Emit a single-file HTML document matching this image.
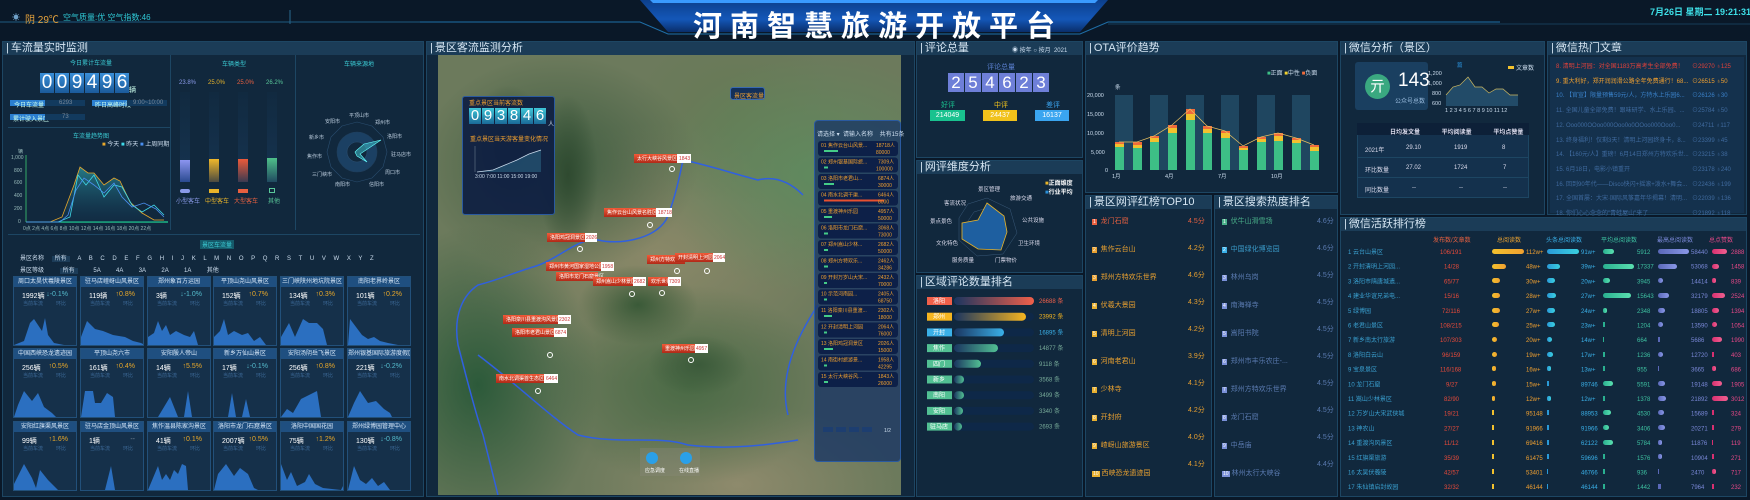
<!DOCTYPE html>
<html><head><meta charset="utf-8">
<style>
*{margin:0;padding:0;box-sizing:border-box}
body{width:1750px;height:500px;overflow:hidden;background:#0a1828;font-family:"Liberation Sans","Noto Sans CJK SC",sans-serif;color:#cfe3f5;position:relative}
.a{position:absolute}
.panel{position:absolute;background:#11283d;border:1px solid #1d4663}
.pt{position:absolute;left:0;top:0;right:0;height:13px;background:#1b3c57;font-size:11px;line-height:13px;color:#d6e6f3;padding-left:3px;white-space:nowrap}
.pt:before{content:"|";margin-right:2px}
.t7{font-size:7px;white-space:nowrap}
.t6{font-size:6px;white-space:nowrap}
.dg{display:inline-block;text-align:center;color:#fff}
.card{position:absolute;width:64px;height:70px;background:#15304a;border:1px solid #22507a;overflow:hidden}
.card .h{height:10px;background:#1f4f80;font-size:6px;line-height:10px;text-align:center;color:#d8e8f8;white-space:nowrap}
.card .v{position:absolute;top:14px;left:8px;font-size:7px;color:#fff}
.card .p{position:absolute;top:14px;right:8px;font-size:7px}
.card .s{position:absolute;top:23px;font-size:5px;color:#3d6a99}
.card svg{position:absolute;left:0;bottom:0}
</style></head><body>

<!-- HEADER -->
<svg class="a" style="left:0;top:0" width="1750" height="42">
  <defs><linearGradient id="tb" x1="0" x2="0" y1="0" y2="1"><stop offset="0" stop-color="#0c3f8c"/><stop offset="0.6" stop-color="#1457b8"/><stop offset="1" stop-color="#0a2e6a"/></linearGradient></defs>
  <polygon points="640,0 1108,0 1080,32 668,32" fill="url(#tb)"/>
  <polygon points="650,0 1098,0 1095,3 653,3" fill="#3a9bff"/>
  <line x1="0" y1="22" x2="290" y2="22" stroke="#1e5a80" stroke-width="1"/>
  <line x1="290" y1="10" x2="290" y2="24" stroke="#2a6a90" stroke-width="1"/>
  <line x1="290" y1="22" x2="640" y2="22" stroke="#1e5a80"/>
  <polyline points="420,22 640,22 668,34 1080,34 1108,22 1500,22" fill="none" stroke="#1f6fa8" stroke-width="1"/>
  <line x1="1108" y1="24" x2="1750" y2="24" stroke="#173c58"/>
</svg>
<div class="a" style="left:12px;top:12px;font-size:8px;color:#6fa0c8">☀</div>
<div class="a" style="left:25px;top:11px;font-size:10px;color:#e6a23c">阴 29℃</div>
<div class="a" style="left:63px;top:12px;font-size:8px;color:#2fc7d4">空气质量:优 空气指数:46</div>
<div class="a" style="left:693px;top:3px;font-size:29px;font-weight:bold;color:#fff;letter-spacing:8px;white-space:nowrap">河南智慧旅游开放平台</div>
<div class="a" style="left:1650px;top:5px;font-size:9px;font-weight:bold;color:#3ee0e8;white-space:nowrap">7月26日 星期二 19:21:31</div>

<!-- LEFT PANEL -->
<div class="panel" style="left:2px;top:41px;width:422px;height:456px">
  <div class="pt">车流量实时监测</div>
</div>
<div class="a t6" style="left:70px;top:58px;color:#3ccbd4">今日累计车流量</div>
<div class="a" style="left:40px;top:73px;display:flex;gap:1px">
  <div class="dg" style="width:14px;height:20px;background:linear-gradient(#3a8fd8,#1b5a9a);font-size:19px;line-height:20px">0</div>
  <div class="dg" style="width:14px;height:20px;background:linear-gradient(#3a8fd8,#1b5a9a);font-size:19px;line-height:20px">0</div>
  <div class="dg" style="width:14px;height:20px;background:linear-gradient(#3a8fd8,#1b5a9a);font-size:19px;line-height:20px">9</div>
  <div class="dg" style="width:14px;height:20px;background:linear-gradient(#3a8fd8,#1b5a9a);font-size:19px;line-height:20px">4</div>
  <div class="dg" style="width:14px;height:20px;background:linear-gradient(#3a8fd8,#1b5a9a);font-size:19px;line-height:20px">9</div>
  <div class="dg" style="width:14px;height:20px;background:linear-gradient(#3a8fd8,#1b5a9a);font-size:19px;line-height:20px">6</div>
</div>
<div class="a t7" style="left:129px;top:85px;color:#cfe">辆</div>
<div class="a" style="left:10px;top:100px;width:35px;height:6px;background:#2b7fd0"></div><div class="a t6" style="left:14px;top:100px;color:#cfe">今日车流量</div>
<div class="a" style="left:45px;top:100px;width:40px;height:6px;background:#123a5e"></div><div class="a t6" style="left:59px;top:100px;color:#789">6293</div>
<div class="a" style="left:92px;top:100px;width:35px;height:6px;background:#2b7fd0"></div><div class="a t6" style="left:95px;top:100px;color:#cfe">昨日高峰时段</div>
<div class="a" style="left:127px;top:100px;width:40px;height:6px;background:#123a5e"></div><div class="a t6" style="left:133px;top:100px;color:#789">9:00~10:00</div>
<div class="a" style="left:10px;top:114px;width:35px;height:6px;background:#2b7fd0"></div><div class="a t6" style="left:13px;top:114px;color:#cfe">累计驶入景区</div>
<div class="a" style="left:45px;top:114px;width:40px;height:6px;background:#123a5e"></div><div class="a t6" style="left:62px;top:114px;color:#789">73</div>
<div class="a" style="left:8px;top:127px;width:162px;height:1px;background:#1d4663"></div>
<div class="a t6" style="left:73px;top:131px;color:#3ccbd4">车流量趋势图</div>
<div class="a t6" style="left:102px;top:139px;color:#cde"><span style="color:#e9a82a">■</span> 今天 <span style="color:#3fd8e8">■</span> 昨天 <span style="color:#4a8ff0">■</span> 上周同期</div>
<svg class="a" style="left:8px;top:145px" width="165" height="88">
  <g font-size="5" fill="#9bb">
    <text x="10" y="8">辆</text><text x="3" y="14">1,000</text><text x="6" y="27">800</text><text x="6" y="39">600</text><text x="6" y="52">400</text><text x="6" y="65">200</text><text x="10" y="78">0</text>
    <text x="15" y="85">0点 2点  4点  6点  8点 10点 12点 14点 16点 18点 20点 22点</text>
  </g>
  <line x1="18" y1="10" x2="18" y2="77" stroke="#3a6"/>
  <line x1="18" y1="77" x2="160" y2="77" stroke="#2fa"/>
  <defs><linearGradient id="ag" x1="0" x2="0" y1="0" y2="1"><stop offset="0" stop-color="#2b8f9a" stop-opacity=".8"/><stop offset="1" stop-color="#123a5a" stop-opacity=".2"/></linearGradient></defs>
  <path d="M18,77 L42,77 54,72 66,40 72,22 80,28 86,28 96,40 106,33 112,36 122,57 134,68 146,75 156,75 L156,77Z" fill="url(#ag)"/>
  <path d="M18,77 L42,77 54,72 66,40 72,22 80,28 86,28 96,40 106,33 112,36 122,57 134,68 146,75 156,75" fill="none" stroke="#e9a82a" stroke-width=".8"/>
  <path d="M18,77 L50,77 62,72 70,30 78,40 86,30 96,52 106,40 114,42 124,60 134,67 146,60 156,70" fill="none" stroke="#3fd8e8" stroke-width=".8"/>
  <path d="M18,77 L52,77 60,70 68,45 76,33 86,40 96,48 106,38 114,52 124,62 136,58 148,64 156,72" fill="none" stroke="#4a8ff0" stroke-width=".8"/>
</svg>
<div class="a" style="left:170px;top:55px;width:1px;height:175px;background:#1d4663"></div>
<div class="a" style="left:295px;top:55px;width:1px;height:175px;background:#1d4663"></div>
<div class="a t6" style="left:222px;top:59px;color:#3ccbd4">车辆类型</div>
<div class="a t6" style="left:344px;top:59px;color:#3ccbd4">车辆来源地</div>
<div class="a t6" style="left:179px;top:80px;color:#8a9ae8">23.8%</div>
<div class="a t6" style="left:208px;top:80px;color:#e8b42a">25.0%</div>
<div class="a t6" style="left:237px;top:80px;color:#e86040">25.0%</div>
<div class="a t6" style="left:266px;top:80px;color:#5ac89a">26.2%</div>
<div class="a" style="left:180px;top:92px;width:10px;height:90px;background:linear-gradient(#112a40,#163350)"></div>
<div class="a" style="left:209px;top:92px;width:10px;height:90px;background:linear-gradient(#112a40,#163350)"></div>
<div class="a" style="left:238px;top:92px;width:10px;height:90px;background:linear-gradient(#112a40,#163350)"></div>
<div class="a" style="left:267px;top:92px;width:10px;height:90px;background:linear-gradient(#112a40,#163350)"></div>
<div class="a" style="left:180px;top:160px;width:10px;height:22px;background:linear-gradient(#8c95f0,#2a4a90)"></div>
<div class="a" style="left:209px;top:159px;width:10px;height:23px;background:linear-gradient(#f0b82a,#4a4a40)"></div>
<div class="a" style="left:238px;top:159px;width:10px;height:23px;background:linear-gradient(#ec5a3a,#3a3a50)"></div>
<div class="a" style="left:267px;top:158px;width:10px;height:24px;background:linear-gradient(#4fc08a,#204a60)"></div>
<div class="a t6" style="left:176px;top:196px;color:#8a9ae8">小型客车</div>
<div class="a t6" style="left:205px;top:196px;color:#e8b42a">中型客车</div>
<div class="a t6" style="left:234px;top:196px;color:#e86040">大型客车</div>
<div class="a t6" style="left:268px;top:196px;color:#5ac89a">其他</div>
<div class="a" style="left:180px;top:189px;width:10px;height:4px;background:#8a9ae8;border-radius:2px"></div>
<div class="a" style="left:209px;top:189px;width:10px;height:4px;background:#e8b42a"></div>
<div class="a" style="left:238px;top:189px;width:10px;height:4px;background:#e86040"></div>
<div class="a" style="left:269px;top:188px;width:6px;height:5px;border:1px solid #5ac89a"></div>
<svg class="a" style="left:297px;top:100px" width="122" height="110">
  <g transform="translate(60,52)" fill="none" stroke="#2a4e70" stroke-width=".6">
    <polygon points="0,-30 15,-26 26,-15 30,0 26,15 15,26 0,30 -15,26 -26,15 -30,0 -26,-15 -15,-26"/>
    <circle r="20" fill="#22507d" opacity=".6"/>
    <circle r="10" fill="#11283d"/>
    <polygon points="0,-2 7,-8 24,-12 3,2 10,10 0,4 -2,0" fill="#3bb0c0" fill-opacity=".6" stroke="#6ff"/>
  </g>
  <g font-size="5" fill="#bcd">
    <text x="52" y="17">平顶山市</text><text x="78" y="24">郑州市</text><text x="90" y="38">洛阳市</text><text x="94" y="56">驻马店市</text><text x="88" y="74">周口市</text><text x="72" y="86">信阳市</text><text x="38" y="86">南阳市</text><text x="15" y="76">三门峡市</text><text x="10" y="58">焦作市</text><text x="12" y="39">新乡市</text><text x="28" y="23">安阳市</text>
  </g>
</svg>
<div class="a" style="left:8px;top:234px;width:412px;height:1px;background:#1d4663"></div>
<div class="a t6" style="left:200px;top:240px;color:#3ccbd4;background:#155a6a;padding:0 2px">景区车流量</div>
<div class="a t6" style="left:20px;top:253px;color:#cde;word-spacing:6px">景区名称 <span style="background:#1c3c58;padding:0 3px">所有</span> A B C D E F G H I J K L M N O P Q R S T U V W X Y Z</div>
<div class="a t6" style="left:20px;top:265px;color:#cde;word-spacing:14px">景区等级 <span style="background:#1c3c58;padding:0 3px">所有</span> 5A 4A 3A 2A 1A 其他</div>

<!-- cards -->
<div class="card" style="left:13px;top:276px"><div class="h">周口太昊伏羲陵景区</div><div class="v">1992辆</div><div class="p" style="color:#5bc">↓-0.1%</div><div class="s" style="left:9px">当前车流</div><div class="s" style="left:42px">环比</div><svg width="64" height="30"><path d="M0,30 L10,26 16,8 20,4 24,10 28,16 31,3 34,20 40,28 50,30Z" fill="#2b6fc0"/></svg></div>
<div class="card" style="left:80px;top:276px"><div class="h">驻马店嵖岈山风景区</div><div class="v">119辆</div><div class="p" style="color:#e8a82a">↑0.8%</div><div class="s" style="left:9px">当前车流</div><div class="s" style="left:42px">环比</div><svg width="64" height="30"><path d="M0,30 L0,22 6,6 14,14 22,16 32,20 44,22 52,26 60,28 64,30Z" fill="#2b6fc0"/></svg></div>
<div class="card" style="left:147px;top:276px"><div class="h">郑州象百方运园</div><div class="v">3辆</div><div class="p" style="color:#5bc">↓-1.0%</div><div class="s" style="left:9px">当前车流</div><div class="s" style="left:42px">环比</div><svg width="64" height="30"><path d="M0,30 L0,22 6,18 10,6 14,16 18,10 22,20 28,16 36,20 42,22 46,16 50,30Z" fill="#2b6fc0"/></svg></div>
<div class="card" style="left:213px;top:276px"><div class="h">平顶山尧山风景区</div><div class="v">152辆</div><div class="p" style="color:#e8a82a">↑0.7%</div><div class="s" style="left:9px">当前车流</div><div class="s" style="left:42px">环比</div><svg width="64" height="30"><path d="M0,30 L0,22 6,16 10,4 14,20 20,16 28,20 34,18 40,26 46,22 52,30Z" fill="#2b6fc0"/></svg></div>
<div class="card" style="left:280px;top:276px"><div class="h">三门峡陕州地坑院景区</div><div class="v">134辆</div><div class="p" style="color:#e8a82a">↑0.3%</div><div class="s" style="left:9px">当前车流</div><div class="s" style="left:42px">环比</div><svg width="64" height="30"><path d="M0,30 L0,22 8,8 14,22 22,4 28,8 36,8 42,14 46,30Z" fill="#2b6fc0"/></svg></div>
<div class="card" style="left:347px;top:276px"><div class="h">南阳老界岭景区</div><div class="v">101辆</div><div class="p" style="color:#e8a82a">↑0.2%</div><div class="s" style="left:9px">当前车流</div><div class="s" style="left:42px">环比</div><svg width="64" height="30"><path d="M0,30 L2,4 8,12 14,20 20,24 26,22 32,26 40,28 50,30Z" fill="#2b6fc0"/></svg></div>

<div class="card" style="left:13px;top:348px"><div class="h">中国西峡恐龙遗迹园</div><div class="v">256辆</div><div class="p" style="color:#e8a82a">↑0.5%</div><div class="s" style="left:9px">当前车流</div><div class="s" style="left:42px">环比</div><svg width="64" height="30"><path d="M0,30 L4,18 10,4 18,14 24,6 30,20 38,26 42,30Z" fill="#2b6fc0"/></svg></div>
<div class="card" style="left:80px;top:348px"><div class="h">平顶山尧六市</div><div class="v">161辆</div><div class="p" style="color:#e8a82a">↑0.4%</div><div class="s" style="left:9px">当前车流</div><div class="s" style="left:42px">环比</div><svg width="64" height="30"><path d="M0,30 L4,4 12,4 14,16 20,16 26,6 32,10 34,30Z" fill="#2b6fc0"/></svg></div>
<div class="card" style="left:147px;top:348px"><div class="h">安阳殷人帝山</div><div class="v">14辆</div><div class="p" style="color:#e8a82a">↑5.5%</div><div class="s" style="left:9px">当前车流</div><div class="s" style="left:42px">环比</div><svg width="64" height="30"><path d="M10,30 L22,10 30,30Z M36,30 L40,4 44,30Z" fill="#2b6fc0"/></svg></div>
<div class="card" style="left:213px;top:348px"><div class="h">新乡万仙山景区</div><div class="v">17辆</div><div class="p" style="color:#5bc">↓-0.1%</div><div class="s" style="left:9px">当前车流</div><div class="s" style="left:42px">环比</div><svg width="64" height="30"><path d="M14,30 L18,6 22,30Z M28,30 L32,12 36,30Z" fill="#2b6fc0"/></svg></div>
<div class="card" style="left:280px;top:348px"><div class="h">安阳汤阴岳飞景区</div><div class="v">256辆</div><div class="p" style="color:#e8a82a">↑0.8%</div><div class="s" style="left:9px">当前车流</div><div class="s" style="left:42px">环比</div><svg width="64" height="30"><path d="M0,30 L6,22 12,26 20,12 28,8 36,4 40,30Z" fill="#2b6fc0"/></svg></div>
<div class="card" style="left:347px;top:348px"><div class="h">郑州银基国际旅游度假区</div><div class="v">221辆</div><div class="p" style="color:#5bc">↓-0.2%</div><div class="s" style="left:9px">当前车流</div><div class="s" style="left:42px">环比</div><svg width="64" height="30"><path d="M0,30 L6,16 12,4 20,16 28,14 36,22 42,26 44,30Z" fill="#2b6fc0"/></svg></div>

<div class="card" style="left:13px;top:421px"><div class="h">安阳红旗渠风景区</div><div class="v">99辆</div><div class="p" style="color:#e8a82a">↑1.6%</div><div class="s" style="left:9px">当前车流</div><div class="s" style="left:42px">环比</div><svg width="64" height="30"><path d="M0,30 L0,24 10,4 18,18 22,28 26,10 34,20 44,30Z" fill="#2b6fc0"/></svg></div>
<div class="card" style="left:80px;top:421px"><div class="h">驻马店金顶山风景区</div><div class="v">1辆</div><div class="p" style="color:#789">--</div><div class="s" style="left:9px">当前车流</div><div class="s" style="left:42px">环比</div><svg width="64" height="30"><path d="M24,30 L30,6 34,30Z" fill="#2b6fc0"/></svg></div>
<div class="card" style="left:147px;top:421px"><div class="h">焦作温县陈家沟景区</div><div class="v">41辆</div><div class="p" style="color:#e8a82a">↑0.1%</div><div class="s" style="left:9px">当前车流</div><div class="s" style="left:42px">环比</div><svg width="64" height="30"><path d="M0,30 L10,6 14,20 18,14 22,20 26,10 30,14 34,4 38,6 40,30Z" fill="#2b6fc0"/></svg></div>
<div class="card" style="left:213px;top:421px"><div class="h">洛阳市龙门石窟景区</div><div class="v">2007辆</div><div class="p" style="color:#e8a82a">↑0.5%</div><div class="s" style="left:9px">当前车流</div><div class="s" style="left:42px">环比</div><svg width="64" height="30"><path d="M0,30 L4,14 12,4 20,16 26,8 34,14 40,28 44,30Z" fill="#2b6fc0"/></svg></div>
<div class="card" style="left:280px;top:421px"><div class="h">洛阳中国国花园</div><div class="v">75辆</div><div class="p" style="color:#e8a82a">↑1.2%</div><div class="s" style="left:9px">当前车流</div><div class="s" style="left:42px">环比</div><svg width="64" height="30"><path d="M0,30 L0,4 6,20 10,12 16,26 24,22 28,14 34,24 42,28 60,30 64,22 64,30Z" fill="#2b6fc0"/></svg></div>
<div class="card" style="left:347px;top:421px"><div class="h">郑州绿博园管理中心</div><div class="v">130辆</div><div class="p" style="color:#5bc">↓-0.8%</div><div class="s" style="left:9px">当前车流</div><div class="s" style="left:42px">环比</div><svg width="64" height="30"><path d="M0,30 L6,6 12,20 18,24 24,18 30,26 36,22 42,30Z" fill="#2b6fc0"/></svg></div>

<!-- MAP PANEL -->
<div class="panel" style="left:426px;top:41px;width:489px;height:456px"><div class="pt">景区客流监测分析</div></div>
<div class="a" style="left:438px;top:55px;width:463px;height:440px;overflow:hidden;background:
 radial-gradient(ellipse 30px 80px at 130px 120px,#2f4a30,transparent),
 radial-gradient(ellipse 40px 60px at 70px 90px,#304a32,transparent),
 radial-gradient(ellipse 60px 40px at 200px 250px,#3a5a38,transparent),
 radial-gradient(ellipse 50px 30px at 260px 310px,#3b5a3a,transparent),
 radial-gradient(ellipse 120px 160px at 40px 330px,#2c5a3a,transparent),
 radial-gradient(ellipse 140px 110px at 120px 110px,#3e5c40,transparent),
 radial-gradient(ellipse 160px 120px at 380px 120px,#5f8a5e,transparent),
 radial-gradient(ellipse 110px 90px at 300px 60px,#667a55,transparent),
 radial-gradient(ellipse 140px 100px at 250px 330px,#4a6a45,transparent),
 radial-gradient(ellipse 200px 130px at 220px 200px,#8a8868,transparent),
 radial-gradient(ellipse 160px 80px at 300px 430px,#8e8a6c,transparent),
 #6c7a5c">
<svg width="463" height="440" style="position:absolute;left:0;top:0">
 <path d="M245,105 C240,130 235,150 228,165 C215,185 180,190 160,185 C140,182 120,205 95,212 C75,218 60,225 40,230 C25,240 15,260 20,290 C28,320 35,350 45,380 L60,440" fill="none" stroke="#3060e0" stroke-width="1.5"/>
 <path d="M245,105 C270,110 300,120 320,125 340,120 355,130 365,140" fill="none" stroke="#3060e0" stroke-width="1.5"/>
 <path d="M40,300 C80,330 110,360 140,380 180,390 220,380 250,390 290,395 330,390 360,385 400,380 405,440" fill="none" stroke="#3060e0" stroke-width="1.5"/>
 <path d="M380,250 C360,280 340,320 350,360 370,380" fill="none" stroke="#3060e0" stroke-width="1.5"/>
</svg>
</div>
<!-- map overlay left box -->
<div class="a" style="left:462px;top:96px;width:93px;height:119px;background:rgba(14,30,66,.92);border:1px solid #2a5aa0;border-radius:3px"></div>
<div class="a t6" style="left:469px;top:98px;color:#f0a030">重点景区当前客流数</div>
<div class="a" style="left:469px;top:108px;display:flex;gap:1px">
 <div class="dg" style="width:12px;height:16px;background:linear-gradient(#3fc7d8,#1a6a98);font-size:15px;line-height:16px">0</div>
 <div class="dg" style="width:12px;height:16px;background:linear-gradient(#3fc7d8,#1a6a98);font-size:15px;line-height:16px">9</div>
 <div class="dg" style="width:12px;height:16px;background:linear-gradient(#3fc7d8,#1a6a98);font-size:15px;line-height:16px">3</div>
 <div class="dg" style="width:12px;height:16px;background:linear-gradient(#3fc7d8,#1a6a98);font-size:15px;line-height:16px">8</div>
 <div class="dg" style="width:12px;height:16px;background:linear-gradient(#3fc7d8,#1a6a98);font-size:15px;line-height:16px">4</div>
 <div class="dg" style="width:12px;height:16px;background:linear-gradient(#3fc7d8,#1a6a98);font-size:15px;line-height:16px">6</div>
</div>
<div class="a t6" style="left:548px;top:119px;color:#cde">人</div>
<div class="a t6" style="left:470px;top:134px;color:#f0a030">重点景区当天游客量变化情况</div>
<svg class="a" style="left:465px;top:138px" width="90" height="40">
 <path d="M12,34 L28,32 40,27 52,22 64,16 76,12 L76,34Z" fill="#2a6080" opacity=".6"/>
 <polyline points="12,34 28,32 40,27 52,22 64,16 76,12" fill="none" stroke="#cde" stroke-width=".7"/>
 <line x1="10" y1="8" x2="10" y2="34" stroke="#789" stroke-width=".5"/>
 <text x="10" y="40" font-size="5" fill="#cde">3:00  7:00  11:00  15:00  19:00</text>
</svg>
<div class="a" style="left:730px;top:87px;width:35px;height:13px;background:#13305a;border:1px solid #3a6ab0;border-radius:3px"></div>
<div class="a t6" style="left:734px;top:91px;color:#f0a030">景区客流量</div>
<div class="a" style="left:814px;top:120px;width:87px;height:342px;background:rgba(20,50,100,.75);border:1px solid #2a5aa0;border-radius:4px"></div>
<div class="a t6" style="left:817px;top:129px;color:#cde">请选择 ▾ &nbsp;请输入名称 &nbsp; &nbsp;共有15条</div>
<svg class="a" style="left:818px;top:141px" width="82" height="300">
 <g font-size="5">
  <g><rect y="0" width="80" height="15" rx="3" fill="#0d2048"/><text x="3" y="6" fill="#f0a030">01 焦作云台山风景...</text><text x="58" y="6" fill="#f0a030">18718人</text><rect x="6" y="9" width="14" height="2" fill="#4c8"/><text x="58" y="13" fill="#f0a030">80000</text></g>
  <g transform="translate(0,16.5)"><rect width="80" height="15" rx="3" fill="#0d2048"/><text x="3" y="6" fill="#f0a030">02 郑州银基国际旅...</text><text x="60" y="6" fill="#f0a030">7309人</text><rect x="6" y="9" width="4" height="2" fill="#4c8"/><text x="58" y="13" fill="#f0a030">100000</text></g>
  <g transform="translate(0,33)"><rect width="80" height="15" rx="3" fill="#0d2048"/><text x="3" y="6" fill="#f0a030">03 洛阳市老君山...</text><text x="60" y="6" fill="#f0a030">6874人</text><rect x="6" y="9" width="10" height="2" fill="#4c8"/><text x="60" y="13" fill="#f0a030">30000</text></g>
  <g transform="translate(0,49.5)"><rect width="80" height="15" rx="3" fill="#0d2048"/><text x="3" y="6" fill="#f0a030">04 南水北调干渠...</text><text x="60" y="6" fill="#f0a030">6464人</text><rect x="6" y="9" width="60" height="2" fill="#e85030"/><text x="60" y="13" fill="#f0a030">8000</text></g>
  <g transform="translate(0,66)"><rect width="80" height="15" rx="3" fill="#0d2048"/><text x="3" y="6" fill="#f0a030">05 重渡神州乐园</text><text x="60" y="6" fill="#f0a030">4957人</text><rect x="6" y="9" width="8" height="2" fill="#4c8"/><text x="60" y="13" fill="#f0a030">50000</text></g>
  <g transform="translate(0,82.5)"><rect width="80" height="15" rx="3" fill="#0d2048"/><text x="3" y="6" fill="#f0a030">06 洛阳市龙门石窟...</text><text x="60" y="6" fill="#f0a030">3068人</text><rect x="6" y="9" width="4" height="2" fill="#4c8"/><text x="60" y="13" fill="#f0a030">73000</text></g>
  <g transform="translate(0,99)"><rect width="80" height="15" rx="3" fill="#0d2048"/><text x="3" y="6" fill="#f0a030">07 郑州嵩山少林...</text><text x="60" y="6" fill="#f0a030">2682人</text><rect x="6" y="9" width="4" height="2" fill="#4c8"/><text x="60" y="13" fill="#f0a030">50000</text></g>
  <g transform="translate(0,115.5)"><rect width="80" height="15" rx="3" fill="#0d2048"/><text x="3" y="6" fill="#f0a030">08 郑州方特欢乐...</text><text x="60" y="6" fill="#f0a030">2462人</text><rect x="6" y="9" width="4" height="2" fill="#4c8"/><text x="60" y="13" fill="#f0a030">34286</text></g>
  <g transform="translate(0,132)"><rect width="80" height="15" rx="3" fill="#0d2048"/><text x="3" y="6" fill="#f0a030">09 开封万岁山大宋...</text><text x="60" y="6" fill="#f0a030">2432人</text><rect x="6" y="9" width="3" height="2" fill="#4c8"/><text x="60" y="13" fill="#f0a030">70000</text></g>
  <g transform="translate(0,148.5)"><rect width="80" height="15" rx="3" fill="#0d2048"/><text x="3" y="6" fill="#f0a030">10 示范河南园...</text><text x="60" y="6" fill="#f0a030">2405人</text><rect x="6" y="9" width="3" height="2" fill="#4c8"/><text x="60" y="13" fill="#f0a030">68750</text></g>
  <g transform="translate(0,165)"><rect width="80" height="15" rx="3" fill="#0d2048"/><text x="3" y="6" fill="#f0a030">11 洛阳栾川县重渡...</text><text x="60" y="6" fill="#f0a030">2302人</text><rect x="6" y="9" width="8" height="2" fill="#4c8"/><text x="60" y="13" fill="#f0a030">18000</text></g>
  <g transform="translate(0,181.5)"><rect width="80" height="15" rx="3" fill="#0d2048"/><text x="3" y="6" fill="#f0a030">12 开封清明上河园</text><text x="60" y="6" fill="#f0a030">2064人</text><rect x="6" y="9" width="3" height="2" fill="#4c8"/><text x="60" y="13" fill="#f0a030">76000</text></g>
  <g transform="translate(0,198)"><rect width="80" height="15" rx="3" fill="#0d2048"/><text x="3" y="6" fill="#f0a030">13 洛阳鸡冠洞景区</text><text x="60" y="6" fill="#f0a030">2026人</text><rect x="6" y="9" width="9" height="2" fill="#4c8"/><text x="60" y="13" fill="#f0a030">15000</text></g>
  <g transform="translate(0,214.5)"><rect width="80" height="15" rx="3" fill="#0d2048"/><text x="3" y="6" fill="#f0a030">14 南街村旅游景...</text><text x="60" y="6" fill="#f0a030">1958人</text><rect x="6" y="9" width="3" height="2" fill="#4c8"/><text x="60" y="13" fill="#f0a030">42295</text></g>
  <g transform="translate(0,231)"><rect width="80" height="15" rx="3" fill="#0d2048"/><text x="3" y="6" fill="#f0a030">15 太行大峡谷风...</text><text x="60" y="6" fill="#f0a030">1843人</text><rect x="6" y="9" width="4" height="2" fill="#4c8"/><text x="60" y="13" fill="#f0a030">26000</text></g>
 </g>
 <g font-size="5" fill="#cde"><rect x="5" y="286" width="10" height="5" fill="#1d3e70"/><rect x="18" y="286" width="10" height="5" fill="#1d3e70"/><rect x="31" y="286" width="10" height="5" fill="#1d3e70"/><rect x="44" y="286" width="10" height="5" fill="#1d3e70"/><text x="66" y="291">1/2</text></g>
</svg>
<!-- markers -->
<svg class="a" style="left:438px;top:55px" width="380" height="440">
 <defs><linearGradient id="mk" x1="0" x2="0" y1="0" y2="1"><stop offset="0" stop-color="#f05a38"/><stop offset="1" stop-color="#b02a18"/></linearGradient></defs>
 <g font-size="5" fill="#fff">
  <g transform="translate(196,99)"><rect width="43" height="9" fill="url(#mk)"/><rect x="43" width="14" height="9" fill="#fff"/><text x="3" y="6">太行大峡谷风景区</text><text x="45" y="6" fill="#c33">1843</text><circle cx="38" cy="15" r="2.5" fill="none" stroke="#fff"/></g>
  <g transform="translate(166,153)"><rect width="52" height="9" fill="url(#mk)"/><rect x="52" width="16" height="9" fill="#fff"/><text x="3" y="6">焦作云台山风景名胜区</text><text x="54" y="6" fill="#c33">18718</text><circle cx="46" cy="17" r="2.5" fill="none" stroke="#fff"/></g>
  <g transform="translate(109,178)"><rect width="38" height="9" fill="url(#mk)"/><rect x="38" width="12" height="9" fill="#fff"/><text x="3" y="6">洛阳鸡冠洞景区</text><text x="39" y="6" fill="#c33">2026</text><circle cx="33" cy="16" r="2.5" fill="none" stroke="#fff"/></g>
  <g transform="translate(209,200)"><rect width="38" height="9" fill="url(#mk)"/><text x="3" y="6">郑州方特欢乐世界</text><circle cx="30" cy="16" r="2.5" fill="none" stroke="#fff"/></g>
  <g transform="translate(237,198)"><rect width="38" height="9" fill="url(#mk)"/><rect x="38" width="12" height="9" fill="#fff"/><text x="3" y="6">开封清明上河园</text><text x="39" y="6" fill="#c33">2064</text><circle cx="32" cy="18" r="2.5" fill="none" stroke="#fff"/></g>
  <g transform="translate(108,207)"><rect width="55" height="9" fill="url(#mk)"/><rect x="55" width="13" height="9" fill="#fff"/><text x="3" y="6">郑州市黄河国家湿地公园</text><text x="56" y="6" fill="#c33">1958</text></g>
  <g transform="translate(118,217)"><rect width="42" height="9" fill="url(#mk)"/><text x="3" y="6">洛阳市龙门石窟景区</text></g>
  <g transform="translate(210,222)"><rect width="20" height="9" fill="url(#mk)"/><rect x="20" width="13" height="9" fill="#fff"/><text x="3" y="6">欢乐世界</text><text x="21" y="6" fill="#c33">7309</text><circle cx="14" cy="16" r="2.5" fill="none" stroke="#fff"/></g>
  <g transform="translate(155,222)"><rect width="40" height="9" fill="url(#mk)"/><rect x="40" width="13" height="9" fill="#fff"/><text x="3" y="6">郑州嵩山少林景区</text><text x="41" y="6" fill="#c33">2682</text><circle cx="39" cy="17" r="2.5" fill="none" stroke="#fff"/></g>
  <g transform="translate(65,260)"><rect width="55" height="9" fill="url(#mk)"/><rect x="55" width="13" height="9" fill="#fff"/><text x="3" y="6">洛阳栾川县重渡沟风景区</text><text x="56" y="6" fill="#c33">2302</text><circle cx="47" cy="40" r="2.5" fill="none" stroke="#fff"/></g>
  <g transform="translate(74,273)"><rect width="42" height="9" fill="url(#mk)"/><rect x="42" width="13" height="9" fill="#fff"/><text x="3" y="6">洛阳市老君山景区</text><text x="43" y="6" fill="#c33">6874</text></g>
  <g transform="translate(224,289)"><rect width="33" height="9" fill="url(#mk)"/><rect x="33" width="13" height="9" fill="#fff"/><text x="3" y="6">重渡神州乐园</text><text x="34" y="6" fill="#c33">4957</text><circle cx="29" cy="16" r="2.5" fill="none" stroke="#fff"/></g>
  <g transform="translate(58,319)"><rect width="48" height="9" fill="url(#mk)"/><rect x="48" width="14" height="9" fill="#fff"/><text x="3" y="6">南水北调渠首生态区</text><text x="50" y="6" fill="#c33">6464</text><circle cx="42" cy="17" r="2.5" fill="none" stroke="#fff"/></g>
 </g>
 <rect x="202" y="393" width="60" height="28" fill="#8a8a7a" opacity=".35"/>
 <circle cx="214" cy="403" r="6" fill="#2aa0e8"/><circle cx="248" cy="403" r="6" fill="#2aa0e8"/>
 <text x="207" y="417" font-size="5" fill="#fff">应急调度</text><text x="241" y="417" font-size="5" fill="#fff">在线直播</text>
</svg>

<!-- 评论总量 -->
<div class="panel" style="left:916px;top:41px;width:167px;height:117px"><div class="pt">评论总量</div></div>
<div class="a t6" style="left:1012px;top:45px;color:#cde">◉ 按年 ○ 按月 &nbsp;2021</div>
<div class="a t7" style="left:987px;top:62px;color:#5a7fcf">评论总量</div>
<div class="a" style="left:948px;top:73px;display:flex;gap:1px">
 <div class="dg" style="width:16px;height:19px;background:#6e7fd8;font-size:17px;line-height:19px">2</div>
 <div class="dg" style="width:16px;height:19px;background:#6e7fd8;font-size:17px;line-height:19px">5</div>
 <div class="dg" style="width:16px;height:19px;background:#6e7fd8;font-size:17px;line-height:19px">4</div>
 <div class="dg" style="width:16px;height:19px;background:#6e7fd8;font-size:17px;line-height:19px">6</div>
 <div class="dg" style="width:16px;height:19px;background:#6e7fd8;font-size:17px;line-height:19px">2</div>
 <div class="dg" style="width:16px;height:19px;background:#6e7fd8;font-size:17px;line-height:19px">3</div>
</div>
<div class="a t7" style="left:941px;top:100px;color:#19c28f">好评</div>
<div class="a t7" style="left:994px;top:100px;color:#f1c21b">中评</div>
<div class="a t7" style="left:1046px;top:100px;color:#3aa5f0">差评</div>
<div class="a t7" style="left:930px;top:110px;width:35px;height:11px;background:#19c28f;color:#fff;text-align:center;line-height:11px">214049</div>
<div class="a t7" style="left:983px;top:110px;width:34px;height:11px;background:#f1c21b;color:#fff;text-align:center;line-height:11px">24437</div>
<div class="a t7" style="left:1035px;top:110px;width:34px;height:11px;background:#3aa5f0;color:#fff;text-align:center;line-height:11px">16137</div>

<!-- 网评维度分析 -->
<div class="panel" style="left:916px;top:160px;width:167px;height:113px"><div class="pt">网评维度分析</div></div>
<div class="a t6" style="left:1045px;top:178px;color:#fff;font-weight:bold"><span style="color:#e8b42a">■</span>正面维度<br><span style="color:#2a8fd8">■</span>行业平均</div>
<svg class="a" style="left:930px;top:180px" width="120" height="92">
 <g transform="translate(57,48)">
  <polygon points="0,-30 23,-19 30,5 16,26 -10,28 -28,12 -28,-10 -19,-24" fill="none" stroke="#3a5a7a" stroke-width=".5"/>
  <polygon points="0,-20 15,-13 20,3 10,17 -7,19 -19,8 -19,-7 -13,-16" fill="none" stroke="#3a5a7a" stroke-width=".5"/>
  <polygon points="0,-25 17,-12 20,4 14,22 -9,21 -25,11 -25,-5 -9,-8" fill="#1e5fa0" stroke="#e8b42a" stroke-width=".8"/>
 </g>
 <g font-size="5.5" fill="#dde">
  <text x="48" y="11">景区管理</text><text x="80" y="20">旅游交通</text><text x="92" y="42">公共设施</text><text x="88" y="65">卫生环境</text><text x="65" y="82">门票物价</text><text x="22" y="82">服务质量</text><text x="6" y="65">文化特色</text><text x="0" y="43">景点景色</text><text x="14" y="25">客流状况</text>
 </g>
</svg>

<!-- 区域评论数量排名 -->
<div class="panel" style="left:916px;top:275px;width:167px;height:222px"><div class="pt">区域评论数量排名</div></div>
<svg class="a" style="left:920px;top:297px" width="162" height="150">
 <defs>
  <linearGradient id="r1"><stop offset="0" stop-color="#1a3560"/><stop offset="1" stop-color="#f0604a"/></linearGradient>
  <linearGradient id="r2"><stop offset="0" stop-color="#1a3560"/><stop offset="1" stop-color="#f5b520"/></linearGradient>
  <linearGradient id="r3"><stop offset="0" stop-color="#1a3560"/><stop offset="1" stop-color="#3ab0e8"/></linearGradient>
  <linearGradient id="r4"><stop offset="0" stop-color="#1a3560"/><stop offset="1" stop-color="#52c093"/></linearGradient>
 </defs>
 <g font-size="6">
  <g><rect x="7" y="0" width="25" height="8" fill="#f0604a"/><text x="13" y="6" fill="#fff">洛阳</text><rect x="34" y="0" width="80" height="8" rx="4" fill="#0e2848"/><rect x="34" y="0" width="80" height="8" rx="4" fill="url(#r1)"/><text x="119" y="6" fill="#f0604a">26688 条</text></g>
  <g transform="translate(0,15.7)"><rect x="7" y="0" width="25" height="8" fill="#f5b520"/><text x="13" y="6" fill="#fff">郑州</text><rect x="34" y="0" width="80" height="8" rx="4" fill="#0e2848"/><rect x="34" y="0" width="72" height="8" rx="4" fill="url(#r2)"/><text x="119" y="6" fill="#f5b520">23992 条</text></g>
  <g transform="translate(0,31.4)"><rect x="7" y="0" width="25" height="8" fill="#3ab0e8"/><text x="13" y="6" fill="#fff">开封</text><rect x="34" y="0" width="80" height="8" rx="4" fill="#0e2848"/><rect x="34" y="0" width="50" height="8" rx="4" fill="url(#r3)"/><text x="119" y="6" fill="#3ab0e8">16895 条</text></g>
  <g transform="translate(0,47.1)"><rect x="7" y="0" width="25" height="8" fill="#52c093"/><text x="13" y="6" fill="#fff">焦作</text><rect x="34" y="0" width="80" height="8" rx="4" fill="#0e2848"/><rect x="34" y="0" width="44" height="8" rx="4" fill="url(#r4)"/><text x="119" y="6" fill="#7a9">14877 条</text></g>
  <g transform="translate(0,62.8)"><rect x="7" y="0" width="25" height="8" fill="#52c093"/><text x="13" y="6" fill="#fff">四门</text><rect x="34" y="0" width="80" height="8" rx="4" fill="#0e2848"/><rect x="34" y="0" width="27" height="8" rx="4" fill="url(#r4)"/><text x="119" y="6" fill="#7a9">9118 条</text></g>
  <g transform="translate(0,78.5)"><rect x="7" y="0" width="25" height="8" fill="#52c093"/><text x="13" y="6" fill="#fff">新乡</text><rect x="34" y="0" width="80" height="8" rx="4" fill="#0e2848"/><rect x="34" y="0" width="10" height="8" rx="4" fill="url(#r4)"/><text x="119" y="6" fill="#7a9">3568 条</text></g>
  <g transform="translate(0,94.2)"><rect x="7" y="0" width="25" height="8" fill="#52c093"/><text x="13" y="6" fill="#fff">南阳</text><rect x="34" y="0" width="80" height="8" rx="4" fill="#0e2848"/><rect x="34" y="0" width="10" height="8" rx="4" fill="url(#r4)"/><text x="119" y="6" fill="#7a9">3499 条</text></g>
  <g transform="translate(0,109.9)"><rect x="7" y="0" width="25" height="8" fill="#52c093"/><text x="13" y="6" fill="#fff">安阳</text><rect x="34" y="0" width="80" height="8" rx="4" fill="#0e2848"/><rect x="34" y="0" width="9" height="8" rx="4" fill="url(#r4)"/><text x="119" y="6" fill="#7a9">3340 条</text></g>
  <g transform="translate(0,125.6)"><rect x="7" y="0" width="25" height="8" fill="#52c093"/><text x="10" y="6" fill="#fff">驻马店</text><rect x="34" y="0" width="80" height="8" rx="4" fill="#0e2848"/><rect x="34" y="0" width="8" height="8" rx="4" fill="url(#r4)"/><text x="119" y="6" fill="#7a9">2693 条</text></g>
 </g>
</svg>

<!-- OTA -->
<div class="panel" style="left:1085px;top:41px;width:253px;height:152px"><div class="pt">OTA评价趋势</div></div>
<div class="a t6" style="left:1267px;top:68px;color:#cde"><span style="color:#3dbf86">■</span>正面 <span style="color:#f2d12e">■</span>中性 <span style="color:#f06b3b">■</span>负面</div>
<svg class="a" style="left:1085px;top:80px" width="253" height="100">
 <g font-size="5.5" fill="#cde"><text x="30" y="9">条</text><text x="2" y="17">20,000</text><text x="2" y="36">15,000</text><text x="2" y="55">10,000</text><text x="6" y="74">5,000</text><text x="20" y="92">0</text>
 <text x="27" y="98">1月</text><text x="80" y="98">4月</text><text x="133" y="98">7月</text><text x="186" y="98">10月</text></g>
 <g fill="#1f4660"><rect x="30" y="15" width="18" height="75"/><rect x="65" y="15" width="18" height="75"/><rect x="101" y="15" width="18" height="75"/><rect x="136" y="15" width="18" height="75"/><rect x="172" y="15" width="18" height="75"/><rect x="207" y="15" width="18" height="75"/></g>
 <g>
  <rect x="30" y="67" width="9" height="23" fill="#3dbf86"/><rect x="30" y="64" width="9" height="3" fill="#f2c12e"/><rect x="30" y="62" width="9" height="2" fill="#f06b3b"/>
  <rect x="48" y="68" width="9" height="22" fill="#3dbf86"/><rect x="48" y="65" width="9" height="3" fill="#f2c12e"/><rect x="48" y="62" width="9" height="3" fill="#f06b3b"/>
  <rect x="65" y="62" width="9" height="28" fill="#3dbf86"/><rect x="65" y="58" width="9" height="4" fill="#f2c12e"/><rect x="65" y="56" width="9" height="2" fill="#f06b3b"/>
  <rect x="83" y="53" width="9" height="37" fill="#3dbf86"/><rect x="83" y="48" width="9" height="5" fill="#f2c12e"/><rect x="83" y="45" width="9" height="3" fill="#f06b3b"/>
  <rect x="101" y="40" width="9" height="50" fill="#3dbf86"/><rect x="101" y="34" width="9" height="6" fill="#f2c12e"/><rect x="101" y="29" width="9" height="5" fill="#f06b3b"/>
  <rect x="118" y="53" width="9" height="37" fill="#3dbf86"/><rect x="118" y="49" width="9" height="4" fill="#f2c12e"/><rect x="118" y="46" width="9" height="3" fill="#f06b3b"/>
  <rect x="136" y="58" width="9" height="32" fill="#3dbf86"/><rect x="136" y="53" width="9" height="5" fill="#f2c12e"/><rect x="136" y="51" width="9" height="2" fill="#f06b3b"/>
  <rect x="154" y="70" width="9" height="20" fill="#3dbf86"/><rect x="154" y="68" width="9" height="2" fill="#f2c12e"/><rect x="154" y="66" width="9" height="2" fill="#f06b3b"/>
  <rect x="172" y="62" width="9" height="28" fill="#3dbf86"/><rect x="172" y="59" width="9" height="3" fill="#f2c12e"/><rect x="172" y="57" width="9" height="2" fill="#f06b3b"/>
  <rect x="189" y="61" width="9" height="29" fill="#3dbf86"/><rect x="189" y="56" width="9" height="5" fill="#f2c12e"/><rect x="189" y="53" width="9" height="3" fill="#f06b3b"/>
  <rect x="207" y="63" width="9" height="27" fill="#3dbf86"/><rect x="207" y="60" width="9" height="3" fill="#f2c12e"/><rect x="207" y="58" width="9" height="2" fill="#f06b3b"/>
  <rect x="225" y="71" width="9" height="19" fill="#3dbf86"/><rect x="225" y="67" width="9" height="4" fill="#f2c12e"/><rect x="225" y="65" width="9" height="2" fill="#f06b3b"/>
 </g>
 <polyline points="34,62 52,62 69,56 87,45 105,29 122,46 140,51 158,66 176,57 193,53 211,58 229,65" fill="none" stroke="#e8c060" stroke-width=".7"/>
</svg>

<!-- 红榜 -->
<div class="panel" style="left:1085px;top:195px;width:127px;height:302px"><div class="pt">景区网评红榜TOP10</div></div>
<div class="a" style="left:1092px;top:208px;font-size:7px;line-height:27px;white-space:nowrap">
 <div><span style="background:#e86040;color:#fff;font-size:5px;padding:0 1px">1</span> <span style="color:#e86040">&nbsp;龙门石窟</span></div>
 <div style="color:#e8a030"><span style="background:#e8a030;color:#fff;font-size:5px;padding:0 1px">2</span> &nbsp;焦作云台山</div>
 <div style="color:#e8a030"><span style="background:#e8a030;color:#fff;font-size:5px;padding:0 1px">3</span> &nbsp;郑州方特欢乐世界</div>
 <div style="color:#e8a030"><span style="background:#e8b030;color:#fff;font-size:5px;padding:0 1px">4</span> &nbsp;伏羲大景园</div>
 <div style="color:#e8a030"><span style="background:#e8b030;color:#fff;font-size:5px;padding:0 1px">5</span> &nbsp;清明上河园</div>
 <div style="color:#e8a030"><span style="background:#e8b030;color:#fff;font-size:5px;padding:0 1px">6</span> &nbsp;河南老君山</div>
 <div style="color:#e8a030"><span style="background:#e8b030;color:#fff;font-size:5px;padding:0 1px">7</span> &nbsp;少林寺</div>
 <div style="color:#e8a030"><span style="background:#e8b030;color:#fff;font-size:5px;padding:0 1px">8</span> &nbsp;开封府</div>
 <div style="color:#e8a030"><span style="background:#e8b030;color:#fff;font-size:5px;padding:0 1px">9</span> &nbsp;嵖岈山旅游景区</div>
 <div style="color:#e8a030"><span style="background:#e8b030;color:#fff;font-size:5px;padding:0 1px">10</span> 西峡恐龙遗迹园</div>
</div>
<div class="a" style="left:1188px;top:208px;font-size:7px;line-height:27px;color:#e8a030">
 <div style="color:#e86040">4.5分</div><div>4.2分</div><div>4.6分</div><div>4.3分</div><div>4.2分</div><div>3.9分</div><div>4.1分</div><div>4.2分</div><div>4.0分</div><div>4.1分</div>
</div>

<!-- 搜索热度 -->
<div class="panel" style="left:1214px;top:195px;width:124px;height:302px"><div class="pt">景区搜索热度排名</div></div>
<div class="a" style="left:1222px;top:208px;font-size:7px;line-height:27px;white-space:nowrap;color:#4a8aa8">
 <div style="color:#4ab08a"><span style="background:#4ab08a;color:#fff;font-size:5px;padding:0 1px">1</span> &nbsp;伏牛山滑雪场</div>
 <div style="color:#3a9ac8"><span style="background:#3ab0e8;color:#fff;font-size:5px;padding:0 1px">2</span> &nbsp;中国绿化博览园</div>
 <div style="color:#5a7ab0"><span style="background:#7a90d8;color:#fff;font-size:5px;padding:0 1px">3</span> &nbsp;林州乌岗</div>
 <div style="color:#5a7ab0"><span style="background:#7a90d8;color:#fff;font-size:5px;padding:0 1px">4</span> &nbsp;南海禅寺</div>
 <div style="color:#5a7ab0"><span style="background:#7a90d8;color:#fff;font-size:5px;padding:0 1px">5</span> &nbsp;嵩阳书院</div>
 <div style="color:#5a7ab0"><span style="background:#7a90d8;color:#fff;font-size:5px;padding:0 1px">6</span> &nbsp;郑州市丰乐农庄-...</div>
 <div style="color:#5a7ab0"><span style="background:#7a90d8;color:#fff;font-size:5px;padding:0 1px">7</span> &nbsp;郑州方特欢乐世界</div>
 <div style="color:#5a7ab0"><span style="background:#7a90d8;color:#fff;font-size:5px;padding:0 1px">8</span> &nbsp;龙门石窟</div>
 <div style="color:#5a7ab0"><span style="background:#7a90d8;color:#fff;font-size:5px;padding:0 1px">9</span> &nbsp;中岳庙</div>
 <div style="color:#5a7ab0"><span style="background:#7a90d8;color:#fff;font-size:5px;padding:0 1px">10</span> 林州太行大峡谷</div>
</div>
<div class="a" style="left:1317px;top:208px;font-size:7px;line-height:27px;color:#5a7ab0">
 <div>4.6分</div><div>4.6分</div><div>4.5分</div><div>4.5分</div><div>4.5分</div><div>4.5分</div><div>4.5分</div><div>4.5分</div><div>4.5分</div><div>4.4分</div>
</div>

<!-- 微信分析 -->
<div class="panel" style="left:1340px;top:41px;width:205px;height:174px"><div class="pt">微信分析（景区）</div></div>
<div class="a" style="left:1355px;top:62px;width:73px;height:48px;background:#1a3f60;border-radius:3px"></div>
<div class="a" style="left:1365px;top:74px;width:25px;height:25px;border-radius:50%;background:#3aa880;color:#fff;font-size:15px;text-align:center;line-height:25px">亓</div>
<div class="a" style="left:1398px;top:70px;font-size:19px;color:#fff">143</div>
<div class="a t6" style="left:1395px;top:96px;color:#9bd">公众号总数</div>
<svg class="a" style="left:1428px;top:62px" width="115" height="50">
 <g font-size="5.5" fill="#cde"><text x="0" y="13">1,200</text><text x="0" y="23">1,000</text><text x="4" y="33">800</text><text x="4" y="43">600</text><text x="17" y="50">1 2 3 4 5 6 7 8 9 10 11 12</text><text x="29" y="5" fill="#2a8fd8">篇</text></g>
 <path d="M18,33 L25,25 32,23 40,15 47,25 54,25 61,31 68,27 75,27 82,33 90,33 L90,44 18,44Z" fill="#2a5a7a" opacity=".7"/>
 <polyline points="18,33 25,25 32,23 40,15 47,25 54,25 61,31 68,27 75,27 82,33 90,33" fill="none" stroke="#cdb860" stroke-width=".7"/>
 <rect x="80" y="4" width="6" height="3" fill="#f2c12e"/><text x="88" y="8" font-size="6" fill="#cde">文章数</text>
</svg>
<div class="a" style="left:1357px;top:123px;width:172px;height:75px;background:#14314d;border:1px solid #1d4663"></div>
<div class="a" style="left:1357px;top:123px;width:172px;height:12px;background:#0d2038"></div>
<div class="a t6" style="left:1390px;top:127px;color:#dde;font-weight:bold;word-spacing:20px">日均发文量 平均阅读量 平均点赞量</div>
<div class="a t6" style="left:1365px;top:145px;color:#dde">2021年</div><div class="a t6" style="left:1406px;top:145px;color:#dde">29.10</div><div class="a t6" style="left:1454px;top:145px;color:#dde">1919</div><div class="a t6" style="left:1502px;top:145px;color:#dde">8</div>
<div class="a" style="left:1357px;top:157px;width:172px;height:1px;background:#1d4663"></div>
<div class="a t6" style="left:1365px;top:165px;color:#dde">环比数量</div><div class="a t6" style="left:1406px;top:165px;color:#dde">27.02</div><div class="a t6" style="left:1454px;top:165px;color:#dde">1724</div><div class="a t6" style="left:1503px;top:165px;color:#dde">7</div>
<div class="a" style="left:1357px;top:177px;width:172px;height:1px;background:#1d4663"></div>
<div class="a t6" style="left:1365px;top:185px;color:#dde">同比数量</div><div class="a t6" style="left:1412px;top:185px;color:#dde">--</div><div class="a t6" style="left:1459px;top:185px;color:#dde">--</div><div class="a t6" style="left:1503px;top:185px;color:#dde">--</div>

<!-- 微信热门文章 -->
<div class="panel" style="left:1547px;top:41px;width:200px;height:174px"><div class="pt">微信热门文章</div></div>
<div class="a" style="left:1550px;top:57px;width:194px;height:156px;background:#14314d"></div>
<div class="a" style="left:1556px;top:60px;font-size:6px;line-height:14.7px;white-space:nowrap;color:#3f6a9e">
 <div style="color:#e0413a">8. 清明上河园：对全国1183万高考生全部免费！</div>
 <div style="color:#f0a030">9. 重大利好，郑开润润滑公路全年免费通行！68...</div>
 <div style="color:#3a80c8">10. 【官宣】限量预售59元/人，方特水上乐园6...</div>
 <div>11. 全国儿童全部免费！跟味研学、水上乐园、...</div>
 <div>12. Ooo000OOoo000Ooo0o0OOoo000Ooo0...</div>
 <div>13. 终身福利！仅剩3天！清明上河园终身卡，8...</div>
 <div>14. 【160元/人】重磅！6月14日郑州方特欢乐世...</div>
 <div>15. 6月18日，电影小镇重开</div>
 <div>16. 回到90年代——Disco快闪+摇滚+泼水+舞会...</div>
 <div>17. 全国首屡：大宋·国际风筝嘉年华揭幕！清明...</div>
 <div>18. 你们心心念念的"青蛙屋山"来了</div>
</div>
<div class="a" style="left:1692px;top:60px;font-size:6px;line-height:14.7px;white-space:nowrap;color:#3f6a9e">
 <div style="color:#e0413a">⊙29270 ♁125</div><div style="color:#f0a030">⊙26515 ♁50</div><div style="color:#3a80c8">⊙26126 ♁30</div><div>⊙25784 ♁50</div><div>⊙24711 ♁117</div><div>⊙23399 ♁45</div><div>⊙23215 ♁38</div><div>⊙23178 ♁240</div><div>⊙22436 ♁199</div><div>⊙22039 ♁136</div><div>⊙21892 ♁118</div>
</div>

<!-- 微信活跃排行榜 -->
<div class="panel" style="left:1340px;top:217px;width:407px;height:280px"><div class="pt">微信活跃排行榜</div></div>
<div class="a t6" style="left:1433px;top:235px;color:#e86040">发布数/文章数</div>
<div class="a t6" style="left:1497px;top:235px;color:#e8a030">总阅读数</div>
<div class="a t6" style="left:1546px;top:235px;color:#3ab0e8">头条总阅读数</div>
<div class="a t6" style="left:1601px;top:235px;color:#3dc0a0">平均总阅读数</div>
<div class="a t6" style="left:1657px;top:235px;color:#7a88d8">最高总阅读数</div>
<div class="a t6" style="left:1709px;top:235px;color:#e84888">总点赞数</div>
<svg class="a" style="left:1340px;top:245px" width="407" height="252">
 <defs>
  <linearGradient id="gy"><stop offset="0" stop-color="#f2c12e"/><stop offset="1" stop-color="#f0a030"/></linearGradient>
  <linearGradient id="gb"><stop offset="0" stop-color="#2a9ad8"/><stop offset="1" stop-color="#3ad0e0"/></linearGradient>
  <linearGradient id="gg"><stop offset="0" stop-color="#2ab090"/><stop offset="1" stop-color="#5ae0b0"/></linearGradient>
  <linearGradient id="gp"><stop offset="0" stop-color="#5a68b8"/><stop offset="1" stop-color="#8a98e8"/></linearGradient>
  <linearGradient id="gr"><stop offset="0" stop-color="#d83070"/><stop offset="1" stop-color="#f06090"/></linearGradient>
 </defs>
 <g font-size="6" fill="#3aa0d0">
  <text x="8" y="9">1  云台山景区</text><text x="8" y="23.7">2  开封清明上河园...</text><text x="8" y="38.4">3  洛阳市隋唐城遗...</text><text x="8" y="53.1">4  建业华谊兄弟电...</text><text x="8" y="67.8">5  绿博园</text><text x="8" y="82.5">6  老君山景区</text><text x="8" y="97.2">7  新乡南太行旅游</text><text x="8" y="111.9">8  洛阳白云山</text><text x="8" y="126.6">9  宝泉景区</text><text x="8" y="141.3">10  龙门石窟</text><text x="8" y="156">11  嵩山少林景区</text><text x="8" y="170.7">12  万岁山大宋武侠城</text><text x="8" y="185.4">13  神农山</text><text x="8" y="200.1">14  重渡沟风景区</text><text x="8" y="214.8">15  红旗渠旅游</text><text x="8" y="229.5">16  太昊伏羲陵</text><text x="8" y="244.2">17  朱仙镇启封故园</text>
 </g>
 <g font-size="6" fill="#e84a3a">
  <text x="100" y="9">106/191</text><text x="104" y="23.7">14/28</text><text x="104" y="38.4">65/77</text><text x="104" y="53.1">15/16</text><text x="102" y="67.8">72/116</text><text x="100" y="82.5">108/215</text><text x="100" y="97.2">107/303</text><text x="102" y="111.9">96/159</text><text x="100" y="126.6">116/168</text><text x="106" y="141.3">9/27</text><text x="104" y="156">82/90</text><text x="104" y="170.7">19/21</text><text x="104" y="185.4">27/27</text><text x="104" y="200.1">11/12</text><text x="104" y="214.8">35/39</text><text x="104" y="229.5">42/57</text><text x="104" y="244.2">32/32</text>
 </g>
 <g>
  <rect x="152" y="4" width="32" height="5" rx="2.5" fill="url(#gy)"/><rect x="152" y="19" width="14" height="5" rx="2.5" fill="url(#gy)"/><rect x="152" y="33" width="8" height="5" rx="2.5" fill="url(#gy)"/><rect x="152" y="48" width="8" height="5" rx="2.5" fill="url(#gy)"/><rect x="152" y="63" width="8" height="5" rx="2.5" fill="url(#gy)"/><rect x="152" y="77" width="7" height="5" rx="2.5" fill="url(#gy)"/><rect x="152" y="92" width="5" height="5" rx="2.5" fill="url(#gy)"/><rect x="152" y="107" width="5" height="5" rx="2.5" fill="url(#gy)"/><rect x="152" y="121" width="4" height="5" rx="2" fill="url(#gy)"/><rect x="152" y="136" width="4" height="5" rx="2" fill="url(#gy)"/><rect x="152" y="151" width="3" height="5" rx="1.5" fill="url(#gy)"/><rect x="152" y="165" width="2" height="5" fill="#f2c12e"/><rect x="152" y="180" width="2" height="5" fill="#f2c12e"/><rect x="152" y="195" width="2" height="5" fill="#f2c12e"/><rect x="152" y="209" width="2" height="5" fill="#f2c12e"/><rect x="152" y="224" width="2" height="5" fill="#f2c12e"/><rect x="152" y="239" width="2" height="5" fill="#f2c12e"/>
  <rect x="207" y="4" width="32" height="5" rx="2.5" fill="url(#gb)"/><rect x="207" y="19" width="13" height="5" rx="2.5" fill="url(#gb)"/><rect x="207" y="33" width="8" height="5" rx="2.5" fill="url(#gb)"/><rect x="207" y="48" width="9" height="5" rx="2.5" fill="url(#gb)"/><rect x="207" y="63" width="8" height="5" rx="2.5" fill="url(#gb)"/><rect x="207" y="77" width="8" height="5" rx="2.5" fill="url(#gb)"/><rect x="207" y="92" width="5" height="5" rx="2.5" fill="url(#gb)"/><rect x="207" y="107" width="6" height="5" rx="2.5" fill="url(#gb)"/><rect x="207" y="121" width="4" height="5" rx="2" fill="url(#gb)"/><rect x="207" y="136" width="2" height="5" fill="#2a9ad8"/><rect x="207" y="151" width="4" height="5" rx="2" fill="url(#gb)"/><rect x="207" y="165" width="2" height="5" fill="#2a9ad8"/><rect x="207" y="180" width="2" height="5" fill="#2a9ad8"/><rect x="207" y="195" width="2" height="5" fill="#2a9ad8"/><rect x="207" y="209" width="2" height="5" fill="#2a9ad8"/><rect x="207" y="224" width="1" height="5" fill="#2a9ad8"/><rect x="207" y="239" width="1" height="5" fill="#2a9ad8"/>
  <rect x="263" y="4" width="11" height="5" rx="2.5" fill="url(#gg)"/><rect x="263" y="19" width="31" height="5" rx="2.5" fill="url(#gg)"/><rect x="263" y="33" width="7" height="5" rx="2.5" fill="url(#gg)"/><rect x="263" y="48" width="28" height="5" rx="2.5" fill="url(#gg)"/><rect x="263" y="63" width="4" height="5" rx="2" fill="url(#gg)"/><rect x="263" y="77" width="2" height="5" fill="#2ab090"/><rect x="263" y="92" width="1" height="5" fill="#2ab090"/><rect x="263" y="107" width="2" height="5" fill="#2ab090"/><rect x="263" y="121" width="2" height="5" fill="#2ab090"/><rect x="263" y="136" width="10" height="5" rx="2.5" fill="url(#gg)"/><rect x="263" y="151" width="2" height="5" fill="#2ab090"/><rect x="263" y="165" width="8" height="5" rx="2.5" fill="url(#gg)"/><rect x="263" y="180" width="6" height="5" rx="2.5" fill="url(#gg)"/><rect x="263" y="195" width="10" height="5" rx="2.5" fill="url(#gg)"/><rect x="263" y="209" width="2" height="5" fill="#2ab090"/><rect x="263" y="224" width="2" height="5" fill="#2ab090"/><rect x="263" y="239" width="2" height="5" fill="#2ab090"/>
  <rect x="318" y="4" width="31" height="5" rx="2.5" fill="url(#gp)"/><rect x="318" y="19" width="19" height="5" rx="2.5" fill="url(#gp)"/><rect x="318" y="33" width="5" height="5" rx="2.5" fill="url(#gp)"/><rect x="318" y="48" width="11" height="5" rx="2.5" fill="url(#gp)"/><rect x="318" y="63" width="7" height="5" rx="2.5" fill="url(#gp)"/><rect x="318" y="77" width="5" height="5" rx="2.5" fill="url(#gp)"/><rect x="318" y="92" width="2" height="5" fill="#5a68b8"/><rect x="318" y="107" width="5" height="5" rx="2.5" fill="url(#gp)"/><rect x="318" y="121" width="1" height="5" fill="#5a68b8"/><rect x="318" y="136" width="7" height="5" rx="2.5" fill="url(#gp)"/><rect x="318" y="151" width="8" height="5" rx="2.5" fill="url(#gp)"/><rect x="318" y="165" width="6" height="5" rx="2.5" fill="url(#gp)"/><rect x="318" y="180" width="7" height="5" rx="2.5" fill="url(#gp)"/><rect x="318" y="195" width="4" height="5" rx="2" fill="url(#gp)"/><rect x="318" y="209" width="4" height="5" rx="2" fill="url(#gp)"/><rect x="318" y="224" width="1" height="5" fill="#5a68b8"/><rect x="318" y="239" width="3" height="5" fill="#5a68b8"/>
  <rect x="372" y="4" width="15" height="5" rx="2.5" fill="url(#gr)"/><rect x="372" y="19" width="7" height="5" rx="2.5" fill="url(#gr)"/><rect x="372" y="33" width="4" height="5" rx="2" fill="url(#gr)"/><rect x="372" y="48" width="13" height="5" rx="2.5" fill="url(#gr)"/><rect x="372" y="63" width="7" height="5" rx="2.5" fill="url(#gr)"/><rect x="372" y="77" width="5" height="5" rx="2.5" fill="url(#gr)"/><rect x="372" y="92" width="10" height="5" rx="2.5" fill="url(#gr)"/><rect x="372" y="107" width="2" height="5" fill="#d83070"/><rect x="372" y="121" width="4" height="5" rx="2" fill="url(#gr)"/><rect x="372" y="136" width="10" height="5" rx="2.5" fill="url(#gr)"/><rect x="372" y="151" width="16" height="5" rx="2.5" fill="url(#gr)"/><rect x="372" y="165" width="2" height="5" fill="#d83070"/><rect x="372" y="180" width="2" height="5" fill="#d83070"/><rect x="372" y="195" width="1" height="5" fill="#d83070"/><rect x="372" y="209" width="2" height="5" fill="#d83070"/><rect x="372" y="224" width="4" height="5" rx="2" fill="url(#gr)"/><rect x="372" y="239" width="2" height="5" fill="#d83070"/>
 </g>
 <g font-size="6" fill="#f0a030"><text x="186" y="9">112w+</text><text x="186" y="23.7">48w+</text><text x="186" y="38.4">30w+</text><text x="186" y="53.1">28w+</text><text x="186" y="67.8">27w+</text><text x="186" y="82.5">25w+</text><text x="186" y="97.2">20w+</text><text x="186" y="111.9">19w+</text><text x="186" y="126.6">16w+</text><text x="186" y="141.3">15w+</text><text x="186" y="156">12w+</text><text x="186" y="170.7">95148</text><text x="186" y="185.4">91966</text><text x="186" y="200.1">69416</text><text x="186" y="214.8">61475</text><text x="186" y="229.5">53401</text><text x="186" y="244.2">46144</text></g>
 <g font-size="6" fill="#3ab0e8"><text x="241" y="9">91w+</text><text x="241" y="23.7">39w+</text><text x="241" y="38.4">20w+</text><text x="241" y="53.1">27w+</text><text x="241" y="67.8">24w+</text><text x="241" y="82.5">23w+</text><text x="241" y="97.2">14w+</text><text x="241" y="111.9">17w+</text><text x="241" y="126.6">13w+</text><text x="241" y="141.3">89746</text><text x="241" y="156">12w+</text><text x="241" y="170.7">88953</text><text x="241" y="185.4">91966</text><text x="241" y="200.1">62122</text><text x="241" y="214.8">59696</text><text x="241" y="229.5">46766</text><text x="241" y="244.2">46144</text></g>
 <g font-size="6" fill="#3dc0a0"><text x="297" y="9">5912</text><text x="297" y="23.7">17337</text><text x="297" y="38.4">3945</text><text x="297" y="53.1">15643</text><text x="297" y="67.8">2348</text><text x="297" y="82.5">1204</text><text x="297" y="97.2">664</text><text x="297" y="111.9">1236</text><text x="297" y="126.6">955</text><text x="297" y="141.3">5591</text><text x="297" y="156">1378</text><text x="297" y="170.7">4530</text><text x="297" y="185.4">3406</text><text x="297" y="200.1">5784</text><text x="297" y="214.8">1576</text><text x="297" y="229.5">936</text><text x="297" y="244.2">1442</text></g>
 <g font-size="6" fill="#7a88d8"><text x="351" y="9">58440</text><text x="351" y="23.7">53068</text><text x="351" y="38.4">14414</text><text x="351" y="53.1">32179</text><text x="351" y="67.8">18805</text><text x="351" y="82.5">13590</text><text x="351" y="97.2">5686</text><text x="351" y="111.9">12720</text><text x="351" y="126.6">3665</text><text x="351" y="141.3">19148</text><text x="351" y="156">21892</text><text x="351" y="170.7">15689</text><text x="351" y="185.4">20271</text><text x="351" y="200.1">11876</text><text x="351" y="214.8">10904</text><text x="351" y="229.5">2470</text><text x="351" y="244.2">7964</text></g>
 <g font-size="6" fill="#e84888"><text x="391" y="9">2888</text><text x="391" y="23.7">1458</text><text x="391" y="38.4">839</text><text x="391" y="53.1">2524</text><text x="391" y="67.8">1394</text><text x="391" y="82.5">1054</text><text x="391" y="97.2">1990</text><text x="391" y="111.9">403</text><text x="391" y="126.6">686</text><text x="391" y="141.3">1905</text><text x="391" y="156">3012</text><text x="391" y="170.7">324</text><text x="391" y="185.4">279</text><text x="391" y="200.1">119</text><text x="391" y="214.8">271</text><text x="391" y="229.5">717</text><text x="391" y="244.2">232</text></g>
</svg>
</body></html>
